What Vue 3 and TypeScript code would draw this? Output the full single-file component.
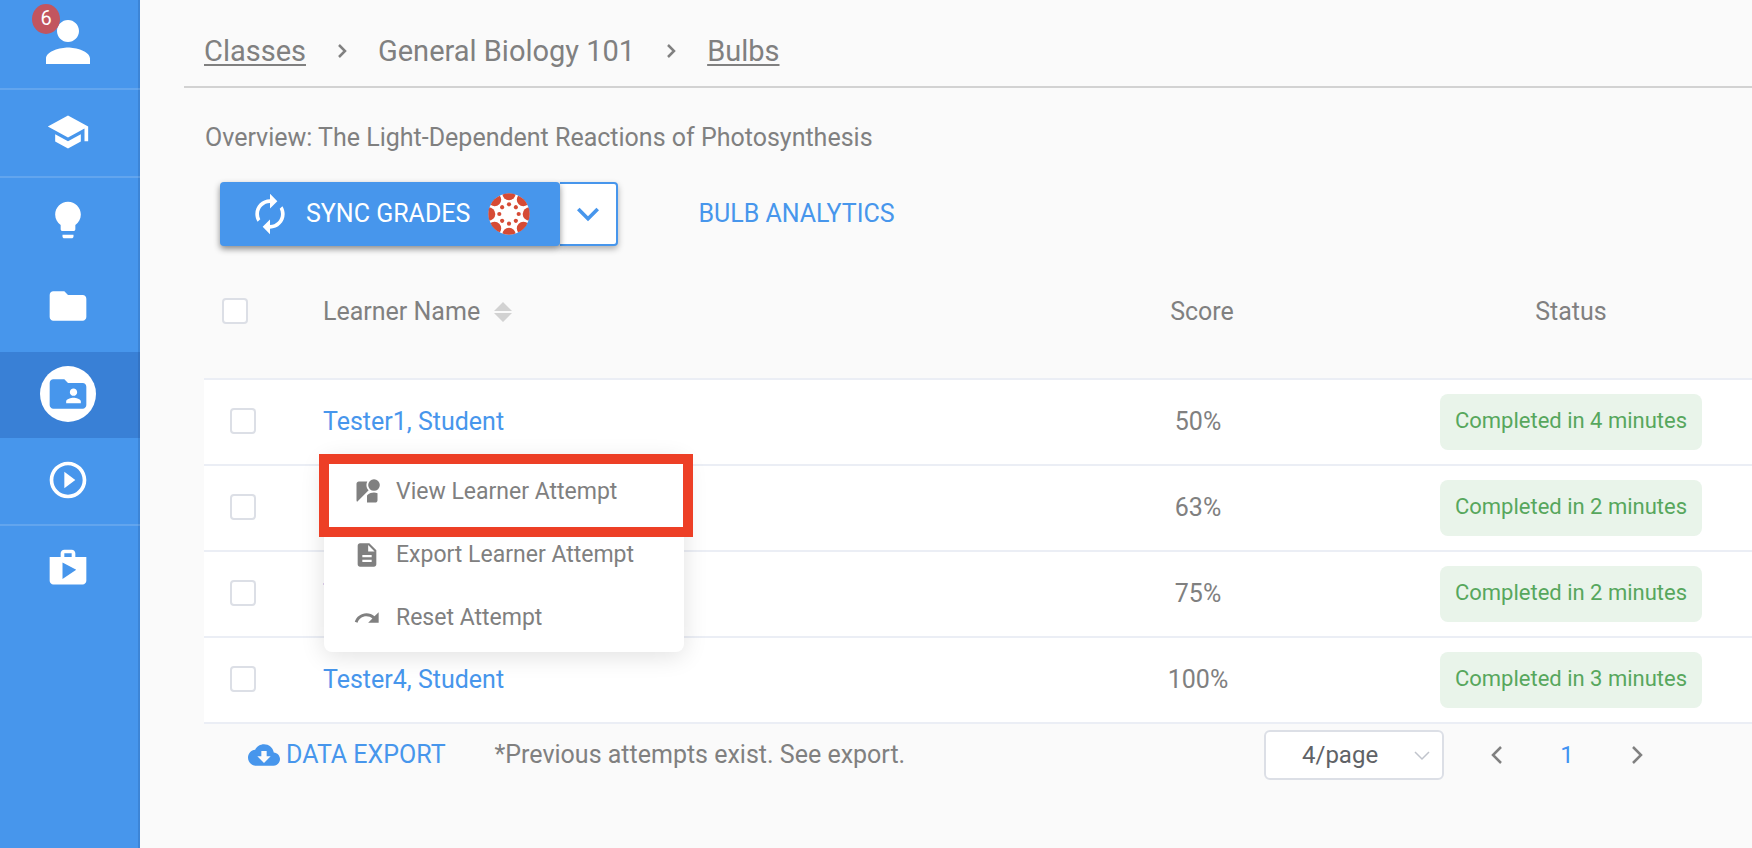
<script setup lang="ts">
import { ref } from 'vue'

interface NavItem {
  label: string
  path: string
  divider?: boolean
  spaced?: boolean
  active?: boolean
  large?: boolean
  badge?: number
}

interface Learner {
  name: string
  score: number
  minutes: number
}

interface MenuAction {
  label: string
  path: string
}

const navItems: NavItem[] = [
  {
    label: 'Profile',
    path: 'M12 12c2.21 0 4-1.79 4-4s-1.79-4-4-4-4 1.79-4 4 1.79 4 4 4zm0 2c-2.67 0-8 1.34-8 4v2h16v-2c0-2.66-5.33-4-8-4z',
    divider: true,
    large: true,
    badge: 6,
  },
  {
    label: 'Courses',
    path: 'M5 13.18v4L12 21l7-3.82v-4L12 17l-7-3.82zM12 3L1 9l11 6 9-4.91V17h2V9L12 3z',
    divider: true,
  },
  {
    label: 'Bulbs',
    path: 'M9 21c0 .55.45 1 1 1h4c.55 0 1-.45 1-1v-1H9v1zm3-19C8.14 2 5 5.14 5 9c0 2.38 1.19 4.47 3 5.74V17c0 .55.45 1 1 1h6c.55 0 1-.45 1-1v-2.26c1.81-1.27 3-3.36 3-5.74 0-3.86-3.14-7-7-7z',
  },
  {
    label: 'Collections',
    path: 'M10 4H4c-1.1 0-1.99.9-1.99 2L2 18c0 1.1.9 2 2 2h16c1.1 0 2-.9 2-2V8c0-1.1-.9-2-2-2h-8l-2-2z',
    spaced: true,
  },
  {
    label: 'Classes',
    path: 'M20 6h-8l-2-2H4c-1.1 0-1.99.9-1.99 2L2 18c0 1.1.9 2 2 2h16c1.1 0 2-.9 2-2V8c0-1.1-.9-2-2-2zm-5 3c1.1 0 2 .9 2 2s-.9 2-2 2-2-.9-2-2 .9-2 2-2zm4 8h-8v-1c0-1.33 2.67-2 4-2s4 .67 4 2v1z',
    active: true,
  },
  {
    label: 'Play',
    path: 'M10 16.5l6-4.5-6-4.5v9zM12 2C6.48 2 2 6.48 2 12s4.48 10 10 10 10-4.48 10-10S17.52 2 12 2zm0 18c-4.41 0-8-3.59-8-8s3.59-8 8-8 8 3.59 8 8-3.59 8-8 8z',
    divider: true,
  },
  {
    label: 'Shop',
    path: 'M16 6V4c0-1.11-.89-2-2-2h-4c-1.11 0-2 .89-2 2v2H2v13c0 1.11.89 2 2 2h16c1.11 0 2-.89 2-2V6h-6zm-6-2h4v2h-4V4zM9 18V9l7.5 4L9 18z',
  },
]

const learners: Learner[] = [
  { name: 'Tester1, Student', score: 50, minutes: 4 },
  { name: 'Tester2, Student', score: 63, minutes: 2 },
  { name: 'Tester3, Student', score: 75, minutes: 2 },
  { name: 'Tester4, Student', score: 100, minutes: 3 },
]

const actions: MenuAction[] = [
  {
    label: 'View Learner Attempt',
    path: 'M12.56 14.33c-.34.27-.56.7-.56 1.17V21h7c1.1 0 2-.9 2-2v-5.98c-.94-.33-1.95-.52-3-.52-2.03 0-3.93.7-5.44 1.83zM23 6a5 5 0 1 1-10 0 5 5 0 0 1 10 0zM11.5 6c0-1.08.27-2.1.74-3H5c-1.1 0-2 .9-2 2v14c0 .55.23 1.05.59 1.41l9.82-9.82C12.23 9.42 11.5 7.8 11.5 6z',
  },
  {
    label: 'Export Learner Attempt',
    path: 'M14 2H6c-1.1 0-1.99.9-1.99 2L4 20c0 1.1.89 2 1.99 2H18c1.1 0 2-.9 2-2V8l-6-6zm2 16H8v-2h8v2zm0-4H8v-2h8v2zm-3-5V3.5L18.5 9H13z',
  },
  {
    label: 'Reset Attempt',
    path: 'M18.4 10.6C16.55 8.99 14.15 8 11.5 8c-4.65 0-8.58 3.03-9.96 7.22L3.9 16c1.05-3.19 4.05-5.5 7.6-5.5 1.95 0 3.73.72 5.12 1.88L13 16h9V7l-3.6 3.6z',
  },
]

const spokes = [0, 45, 90, 135, 180, 225, 270, 315]
const openRow = ref<number | null>(0)
const selected = ref<string[]>([])
const pageSize = ref('4')

function toggleMenu(index: number) {
  openRow.value = openRow.value === index ? null : index
}

function toggleAll(event: Event) {
  const checked = (event.target as HTMLInputElement).checked
  selected.value = checked ? learners.map((l) => l.name) : []
}
</script>

<template>
  <div class="layout">
    <nav class="sidebar" aria-label="Main">
      <a
        v-for="item in navItems"
        :key="item.label"
        href="#"
        class="nav-item"
        :class="{ divider: item.divider, spaced: item.spaced, active: item.active, large: item.large }"
        :aria-label="item.label"
      >
        <span class="nav-icon">
          <svg viewBox="0 0 24 24" aria-hidden="true"><path :d="item.path" /></svg>
        </span>
        <span v-if="item.badge" class="nav-badge">{{ item.badge }}</span>
      </a>
    </nav>

    <main class="main">
      <nav class="crumbs" aria-label="Breadcrumb">
        <a href="#">Classes</a>
        <svg class="crumb-arrow" viewBox="0 0 10 16" aria-hidden="true"><path d="M2 2l6 6-6 6" /></svg>
        <span>General Biology 101</span>
        <svg class="crumb-arrow" viewBox="0 0 10 16" aria-hidden="true"><path d="M2 2l6 6-6 6" /></svg>
        <a href="#">Bulbs</a>
      </nav>

      <div class="content">
        <h1 class="title">Overview: The Light-Dependent Reactions of Photosynthesis</h1>

        <div class="actions">
          <div class="split">
            <button type="button" class="sync">
              <svg class="sync-icon" viewBox="0 0 24 24" aria-hidden="true">
                <path
                  d="M12 6v3l4-4-4-4v3c-4.42 0-8 3.58-8 8 0 1.57.46 3.03 1.24 4.26L6.7 14.8c-.45-.83-.7-1.79-.7-2.8 0-3.31 2.69-6 6-6zm6.76 1.74L17.3 9.2c.44.84.7 1.79.7 2.8 0 3.31-2.69 6-6 6v-3l-4 4 4 4v-3c4.42 0 8-3.58 8-8 0-1.57-.46-3.03-1.24-4.26z"
                />
              </svg>
              <span class="sync-label">SYNC GRADES</span>
              <svg class="logo" viewBox="-21 -21 42 42" aria-hidden="true">
                <defs>
                  <clipPath id="disc"><circle r="20.7" /></clipPath>
                </defs>
                <circle r="20.5" fill="#fff" />
                <g clip-path="url(#disc)" fill="#d64b35">
                  <g v-for="angle in spokes" :key="angle" :transform="`rotate(${angle})`">
                    <ellipse cy="-20.7" rx="6.7" ry="7" />
                    <circle cy="-9.7" r="2.1" />
                  </g>
                </g>
              </svg>
            </button>
            <button type="button" class="more" aria-label="More sync options">
              <svg viewBox="0 0 24 24" aria-hidden="true">
                <path d="M16.59 8.59L12 13.17 7.41 8.59 6 10l6 6 6-6z" />
              </svg>
            </button>
          </div>
          <a href="#" class="analytics">BULB ANALYTICS</a>
        </div>

        <table class="grid">
          <colgroup>
            <col class="col-check" />
            <col />
            <col class="col-score" />
            <col class="col-status" />
          </colgroup>
          <thead>
            <tr>
              <th class="check-head">
                <input
                  type="checkbox"
                  class="box"
                  aria-label="Select all learners"
                  :checked="selected.length === learners.length"
                  @change="toggleAll"
                />
              </th>
              <th class="name">
                <button type="button" class="sort">
                  Learner Name
                  <svg viewBox="0 0 18 22" aria-hidden="true">
                    <path d="M9 1l9 9H0zM0 12h18l-9 9z" />
                  </svg>
                </button>
              </th>
              <th class="score-head">Score</th>
              <th>Status</th>
            </tr>
          </thead>
          <tbody>
            <tr v-for="(learner, index) in learners" :key="learner.name">
              <td class="check-cell">
                <input
                  v-model="selected"
                  type="checkbox"
                  class="box"
                  :value="learner.name"
                  :aria-label="`Select ${learner.name}`"
                />
              </td>
              <td class="name">
                <button type="button" class="learner" :aria-expanded="openRow === index" @click="toggleMenu(index)">
                  {{ learner.name }}
                </button>
                <div v-if="openRow === index" class="menu">
                  <button v-for="action in actions" :key="action.label" type="button" class="menu-item">
                    <svg viewBox="0 0 24 24" aria-hidden="true"><path :d="action.path" /></svg>
                    {{ action.label }}
                  </button>
                  <span class="highlight"></span>
                </div>
              </td>
              <td class="score-cell">{{ learner.score }}%</td>
              <td><span class="status">Completed in {{ learner.minutes }} minutes</span></td>
            </tr>
          </tbody>
        </table>

        <footer class="footer">
          <button type="button" class="export">
            <svg viewBox="0 0 24 24" aria-hidden="true">
              <path
                d="M19.35 10.04C18.67 6.59 15.64 4 12 4 9.11 4 6.6 5.64 5.35 8.04 2.34 8.36 0 10.91 0 14c0 3.31 2.69 6 6 6h13c2.76 0 5-2.24 5-5 0-2.64-2.05-4.78-4.65-4.96zM17 13l-5 5-5-5h3V9h4v4h3z"
              />
            </svg>
            DATA EXPORT
          </button>
          <span class="note">*Previous attempts exist. See export.</span>
          <div class="pager">
            <div class="size">
              <select v-model="pageSize" aria-label="Rows per page">
                <option value="4">4/page</option>
                <option value="10">10/page</option>
                <option value="20">20/page</option>
              </select>
              <svg viewBox="0 0 16 10" aria-hidden="true"><path d="M1 1l7 7 7-7" /></svg>
            </div>
            <button type="button" class="step" aria-label="Previous page">
              <svg viewBox="0 0 12 20" aria-hidden="true"><path d="M10 2l-8 8 8 8" /></svg>
            </button>
            <button type="button" class="step current" aria-current="page">1</button>
            <button type="button" class="step" aria-label="Next page">
              <svg viewBox="0 0 12 20" aria-hidden="true"><path d="M2 2l8 8-8 8" /></svg>
            </button>
          </div>
        </footer>
      </div>
    </main>
  </div>
</template>

<style>
body {
  margin: 0;
  background: #fafafa;
}
</style>

<style scoped>
.layout {
  display: flex;
  min-height: 100vh;
  background: #fafafa;
  color: #808080;
  font-family: Roboto, "Liberation Sans", sans-serif;
  font-size: 25px;
  line-height: 32px;
  overflow-x: clip;
}

.layout *,
.layout *::before {
  box-sizing: border-box;
}

button,
select {
  font: inherit;
  color: inherit;
  background: none;
  border: 0;
  padding: 0;
  cursor: pointer;
}

svg {
  display: block;
  flex: none;
  fill: currentColor;
}

.sidebar {
  flex: none;
  display: flex;
  flex-direction: column;
  width: 140px;
  background: #4796ec;
  box-shadow: inset -2px 0 #3d85d6;
}

.nav-item {
  position: relative;
  display: flex;
  align-items: center;
  justify-content: center;
  height: 86px;
  padding: 0 4px 2px 0;
  color: #fff;
}

.nav-item.divider {
  height: 88px;
  border-bottom: 2px solid rgba(255, 255, 255, 0.15);
}

.nav-item.large {
  height: 90px;
  padding-bottom: 4px;
}

.nav-item.spaced {
  margin-bottom: 2px;
}

.nav-item.active {
  background: rgba(0, 35, 120, 0.19);
  box-shadow: inset -2px 0 #3474c4;
}

.nav-icon svg {
  width: 44px;
  height: 44px;
}

.large .nav-icon svg {
  width: 66px;
  height: 66px;
}

.active .nav-icon {
  padding: 6px;
  border-radius: 50%;
  background: #fff;
  color: #4796ec;
}

.nav-badge {
  position: absolute;
  left: 32px;
  top: 4px;
  width: 28px;
  height: 30px;
  border-radius: 50%;
  background: #c2555f;
  font-size: 20px;
  line-height: 28px;
  text-align: center;
}

.main {
  flex: 1;
  min-width: 0;
  padding-left: 44px;
}

.crumbs {
  display: flex;
  align-items: center;
  gap: 31px;
  height: 88px;
  padding: 16px 20px 0;
  border-bottom: 2px solid #d2d2d2;
  font-size: 29px;
}

.crumbs a {
  color: inherit;
  text-underline-offset: 3px;
  text-decoration-thickness: 2px;
}

.crumb-arrow {
  width: 10px;
  height: 16px;
}

.crumb-arrow path,
.step path,
.size path {
  fill: none;
  stroke: currentColor;
  stroke-width: 2.5;
}

.content {
  padding-left: 20px;
}

.title {
  margin: 0;
  padding: 34px 0 0 1px;
  font-size: 25px;
  line-height: 32px;
  font-weight: 400;
}

.actions {
  display: flex;
  align-items: center;
  gap: 80px;
  padding: 28px 16px 0;
}

.split {
  display: flex;
  height: 64px;
  border-radius: 4px;
  color: #4796ec;
}

.sync {
  position: relative;
  display: flex;
  align-items: center;
  padding: 0 30px 0 28px;
  border-radius: 4px;
  background: #4796ec;
  color: #fff;
  box-shadow: 0 3px 6px rgba(0, 0, 0, 0.45);
}

.sync-label {
  margin: 0 18px 0 14px;
}

.sync-icon {
  width: 44px;
  height: 44px;
}

.logo {
  width: 42px;
  height: 42px;
}

.more {
  display: flex;
  align-items: center;
  justify-content: center;
  width: 58px;
  border: 2px solid #4796ec;
  border-left: 0;
  border-radius: 0 4px 4px 0;
  background: #fff;
  box-shadow: 0 3px 6px rgba(0, 0, 0, 0.3);
}

.more svg {
  width: 44px;
  height: 44px;
}

.analytics {
  color: #4796ec;
  text-decoration: none;
}

.grid {
  width: 100%;
  table-layout: fixed;
  border-spacing: 0;
}

.col-check {
  width: 119px;
}

.col-score {
  width: 380px;
}

.col-status {
  width: 362px;
}

th,
td {
  padding: 0;
  border-bottom: 2px solid #ebeef5;
  text-align: center;
  font-weight: 400;
}

th {
  height: 134px;
}

td {
  height: 86px;
  background: #fff;
}

th.name,
td.name {
  position: relative;
  text-align: left;
}

.check-head,
.check-cell {
  padding-bottom: 2px;
  text-align: left;
}

.check-head {
  padding-left: 18px;
}

.check-cell {
  padding-left: 26px;
}

.score-head {
  padding-left: 4px;
}

.score-cell {
  padding-right: 4px;
}

.box {
  appearance: none;
  display: block;
  width: 26px;
  height: 26px;
  margin: 0;
  border: 2px solid #dcdfe6;
  border-radius: 4px;
  background: #fff;
}

.box:checked {
  border-color: #4796ec;
  background: #4796ec;
}

.sort {
  display: flex;
  align-items: center;
  gap: 14px;
}

.sort svg {
  width: 18px;
  height: 22px;
  color: #d2d2d2;
}

.learner {
  display: block;
  color: #4796ec;
}

.status {
  display: inline-block;
  vertical-align: middle;
  padding: 11px 15px 13px;
  border-radius: 8px;
  background: #e9f4ea;
  color: #57a75d;
  font-size: 22px;
}

.menu {
  position: absolute;
  z-index: 2;
  top: 77px;
  left: 1px;
  width: 360px;
  padding: 3px 0;
  border-radius: 8px;
  background: #fff;
  box-shadow: 0 4px 24px rgba(0, 0, 0, 0.12);
}

.menu-item {
  display: flex;
  align-items: center;
  gap: 15px;
  width: 100%;
  height: 63px;
  padding-left: 29px;
  font-size: 23px;
  white-space: nowrap;
}

.menu-item svg {
  width: 28px;
  height: 28px;
}

.highlight {
  position: absolute;
  top: -3px;
  left: -5px;
  right: -9px;
  height: 83px;
  border: 10px solid #ed3f26;
  pointer-events: none;
}

.footer {
  display: flex;
  align-items: center;
  padding: 6px 80px 0 44px;
}

.export {
  display: flex;
  align-items: center;
  gap: 6px;
  margin-right: 49px;
  color: #4796ec;
}

.export svg {
  width: 32px;
  height: 32px;
}

.pager {
  display: flex;
  align-items: center;
  margin-left: auto;
}

.size {
  position: relative;
  margin-right: 18px;
  color: #606266;
}

.size select {
  appearance: none;
  width: 180px;
  height: 50px;
  padding: 0 44px 0 36px;
  border: 2px solid #dcdfe6;
  border-radius: 6px;
  background: #fff;
  font-size: 24px;
}

.size svg {
  position: absolute;
  right: 14px;
  top: 21px;
  width: 16px;
  height: 10px;
  color: #c0c4cc;
  pointer-events: none;
}

.size path {
  stroke-width: 1.5;
}

.step {
  display: flex;
  align-items: center;
  justify-content: center;
  width: 70px;
  height: 50px;
  font-size: 24px;
}

.step svg {
  width: 12px;
  height: 20px;
}

.step.current {
  color: #4193f2;
}
</style>
